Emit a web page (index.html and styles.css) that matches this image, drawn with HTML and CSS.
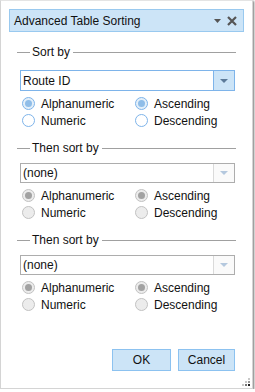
FILE: index.html
```html
<!DOCTYPE html>
<html>
<head>
<meta charset="utf-8">
<link rel="stylesheet" href="styles.css">
</head>
<body>
<div class="dialog">
  <div class="titlebar">
    <span class="title">Advanced Table Sorting</span>
    <span class="tools">
      <svg class="tool-menu" width="7" height="4" viewBox="0 0 7 4"><path d="M0 0H7L3.5 4Z" fill="#555"/></svg>
      <svg class="tool-close" width="10" height="10" viewBox="0 0 10 10"><path d="M1 1L9 9M9 1L1 9" stroke="#555" stroke-width="2.2"/></svg>
    </span>
  </div>

  <div class="content">
    <section class="group first">
      <div class="legend"><span>Sort by</span></div>
      <div class="select focused"><span class="value">Route ID</span><span class="arrow"><svg width="8" height="4" viewBox="0 0 8 4"><path d="M0 0H8L4 4Z"/></svg></span></div>
      <div class="radios">
        <label class="radio checked"><span class="dot"></span>Alphanumeric</label>
        <label class="radio checked"><span class="dot"></span>Ascending</label>
        <label class="radio"><span class="dot"></span>Numeric</label>
        <label class="radio"><span class="dot"></span>Descending</label>
      </div>
    </section>

    <section class="group disabled">
      <div class="legend"><span>Then sort by</span></div>
      <div class="select"><span class="value">(none)</span><span class="arrow"><svg width="8" height="4" viewBox="0 0 8 4"><path d="M0 0H8L4 4Z"/></svg></span></div>
      <div class="radios">
        <label class="radio checked"><span class="dot"></span>Alphanumeric</label>
        <label class="radio checked"><span class="dot"></span>Ascending</label>
        <label class="radio"><span class="dot"></span>Numeric</label>
        <label class="radio"><span class="dot"></span>Descending</label>
      </div>
    </section>

    <section class="group disabled">
      <div class="legend"><span>Then sort by</span></div>
      <div class="select"><span class="value">(none)</span><span class="arrow"><svg width="8" height="4" viewBox="0 0 8 4"><path d="M0 0H8L4 4Z"/></svg></span></div>
      <div class="radios">
        <label class="radio checked"><span class="dot"></span>Alphanumeric</label>
        <label class="radio checked"><span class="dot"></span>Ascending</label>
        <label class="radio"><span class="dot"></span>Numeric</label>
        <label class="radio"><span class="dot"></span>Descending</label>
      </div>
    </section>
  </div>

  <div class="buttons">
    <button class="btn ok">OK</button>
    <button class="btn cancel">Cancel</button>
  </div>

  <svg class="grip" width="9" height="9" viewBox="0 0 9 9">
    <rect x="6" y="0" width="2" height="2" fill="#c8c8c8"/>
    <rect x="3" y="3" width="2" height="2" fill="#c8c8c8"/>
    <rect x="6" y="3" width="2" height="2" fill="#9a9a9a"/>
    <rect x="0" y="6" width="2" height="2" fill="#c8c8c8"/>
    <rect x="3" y="6" width="2" height="2" fill="#777"/>
    <rect x="6" y="6" width="2" height="2" fill="#222"/>
  </svg>
</div>
</body>
</html>
```

FILE: styles.css
```css
html, body {
  margin: 0;
  padding: 0;
  background: #ffffff;
}

body {
  font-family: "Liberation Sans", Arial, sans-serif;
  font-size: 12px;
  color: #000;
}

.dialog {
  position: relative;
  box-sizing: border-box;
  width: 253px;
  height: 389px;
  background: #fff;
  border: 1px solid #d4d4d4;
  border-top-color: #e4e4e4;
  box-shadow: 1px 1px 2px rgba(0, 0, 0, 0.55);
  display: flex;
  flex-direction: column;
}

.titlebar {
  box-sizing: border-box;
  margin: 8px 8px 0 8px;
  height: 23px;
  background: #cce4f7;
  border: 1px solid #99c9ef;
  display: flex;
  align-items: center;
  padding: 0 0 0 4px;
}

.title {
  flex: 1;
  font-size: 12px;
  line-height: 14px;
  color: #111;
}

.tools {
  display: flex;
  align-items: center;
  gap: 6px;
  padding-right: 6px;
}

.tool-menu {
  display: block;
  margin-top: 1px;
}

.tool-close {
  display: block;
}

.content {
  padding: 0 16px;
}

.group {
  margin-top: 12px;
}

.group.first {
  margin-top: 13px;
}

.legend {
  display: flex;
  align-items: center;
  height: 14px;
  line-height: 14px;
  color: #111;
}

.legend::before {
  content: "";
  width: 13px;
  height: 1px;
  background: #a0a0a0;
  margin-right: 2px;
}

.legend::after {
  content: "";
  flex: 1;
  height: 1px;
  background: #a0a0a0;
  margin-left: 3px;
}

.select {
  box-sizing: border-box;
  margin: 8px 1px 0 3px;
  height: 20px;
  border: 1px solid #adadad;
  display: flex;
  align-items: stretch;
  background: #fff;
}

.group.first .select {
  margin-top: 11px;
  height: 21px;
}

.select.focused {
  border-color: #7eb4ea;
}

.select .value {
  flex: 1;
  padding-left: 2px;
  display: flex;
  align-items: center;
  color: #111;
}

.select .arrow {
  width: 20px;
  border-left: 1px solid #dadada;
  background: #fafafa;
  display: flex;
  align-items: center;
  justify-content: center;
}

.select .arrow svg {
  display: block;
  fill: #b4c8de;
}

.select.focused .arrow {
  background: #cce4f7;
  border-left-color: #7eb4ea;
}

.select.focused .arrow svg {
  fill: #5c7a99;
}

.radios {
  display: grid;
  grid-template-columns: 113px 1fr;
  grid-auto-rows: 17px;
  margin: 4px 0 0 5px;
}

.radio {
  display: flex;
  align-items: center;
  gap: 6px;
  color: #111;
  white-space: nowrap;
}

.radio .dot {
  box-sizing: border-box;
  width: 13px;
  height: 13px;
  border-radius: 50%;
  border: 1px solid #7eb4ea;
  background: #fff;
  display: flex;
  align-items: center;
  justify-content: center;
}

.radio.checked .dot {
  background: #e3eff9;
}

.radio.checked .dot::after {
  content: "";
  width: 7px;
  height: 7px;
  border-radius: 50%;
  background: #8fbde8;
}

.disabled .radio .dot {
  border-color: #c2c2c2;
  background: #ececec;
}

.disabled .radio.checked .dot::after {
  background: #a2a2a2;
}

.buttons {
  margin-top: auto;
  margin-bottom: 17px;
  display: flex;
  justify-content: flex-end;
  gap: 7px;
  padding-right: 17px;
}

.btn {
  box-sizing: border-box;
  height: 22px;
  background: #cce4f7;
  border: 1px solid #8cc2f0;
  font-family: "Liberation Sans", Arial, sans-serif;
  font-size: 12px;
  color: #111;
  padding: 0;
  margin: 0;
}

.btn.ok {
  width: 59px;
}

.btn.cancel {
  width: 57px;
}

.grip {
  position: absolute;
  right: 1px;
  bottom: 1px;
}
```
